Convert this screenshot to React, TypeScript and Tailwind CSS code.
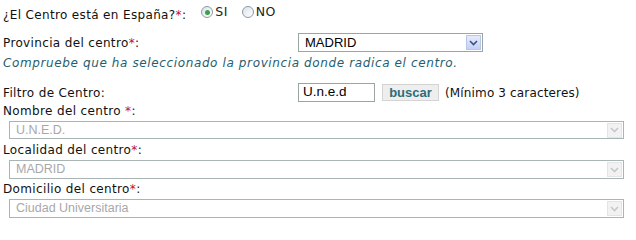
import { ReactNode } from "react";

const FONT = { fontFamily: '"DejaVu Sans", Verdana, sans-serif' };
const ARIAL = { fontFamily: '"Liberation Sans", Arial, sans-serif' };

function Req() {
  return <span className="text-[#c0102a]">*</span>;
}

function Radio({ checked, label }: { checked?: boolean; label: string }) {
  return (
    <span className="flex items-center">
      <span className="flex h-[12px] w-[12px] items-center justify-center rounded-full border border-[#8a9aa8] bg-gradient-to-br from-[#dde3ea] to-white">
        {checked && <span className="h-[5px] w-[5px] rounded-full bg-[#3aa04a]" />}
      </span>
      <span className="ml-[2px] text-[12.5px] leading-[12px] tracking-[0.4px] text-[#222]">{label}</span>
    </span>
  );
}

function Arrow({ disabled }: { disabled?: boolean }) {
  return (
    <span
      className={
        disabled
          ? "flex h-[15px] w-[15px] items-center justify-center border border-[#e4e4e4] bg-[#f2f2f2]"
          : "flex h-[15px] w-[15px] items-center justify-center border border-[#b8c6e8] bg-gradient-to-b from-[#e6ecfb] to-[#c3d0f2]"
      }
    >
      <svg width="9" height="6" viewBox="0 0 9 6">
        <path d="M1 1 L4.5 4.5 L8 1" fill="none" stroke={disabled ? "#c8c8c8" : "#3a4f8c"} strokeWidth="1.6" />
      </svg>
    </span>
  );
}

function Select({ value, disabled, className }: { value: string; disabled?: boolean; className: string }) {
  return (
    <div
      className={`flex items-center justify-between border pl-[6px] pr-[1px] ${
        disabled ? "border-[#a9b4b4] text-[#a8a8a8]" : "border-[#9aa6a6] text-black"
      } bg-white ${className}`}
      style={ARIAL}
    >
      <span className={disabled ? "text-[12.5px]" : "text-[13px]"}>{value}</span>
      <Arrow disabled={disabled} />
    </div>
  );
}

function Label({ children, className = "" }: { children: ReactNode; className?: string }) {
  return <div className={`text-[12px] leading-[14px] tracking-[0.35px] text-[#111] ${className}`}>{children}</div>;
}

export default function App() {
  return (
    <div className="h-[219px] w-[636px] overflow-hidden bg-white pl-[3px] pt-[5px]" style={FONT}>
      <div className="flex h-[20px] items-start">
        <Label className="pt-[3px]">
          ¿El Centro está en España?<Req />:
        </Label>
        <div className="ml-[15px] flex gap-[14px] pt-[1px]">
          <Radio checked label="SI" />
          <Radio label="NO" />
        </div>
      </div>
      <div className="mt-[8px] flex h-[19px] items-center">
        <Label className="w-[295px]">
          Provincia del centro<Req />:
        </Label>
        <Select value="MADRID" className="h-[19px] w-[185px]" />
      </div>
      <div className="mt-[4px] text-[12px] italic leading-[14px] tracking-[0.62px] text-[#1f6070]">
        Compruebe que ha seleccionado la provincia donde radica el centro.
      </div>
      <div className="mt-[13px] flex h-[19px] items-center">
        <Label className="w-[295px]">Filtro de Centro:</Label>
        <div className="flex h-[19px] w-[77px] items-center border border-[#9aa6a6] pl-[4px] text-[13.5px] text-black" style={ARIAL}>
          U.n.e.d
        </div>
        <button
          className="ml-[7px] h-[17px] w-[57px] border border-[#d4d4d4] bg-[#eeeeee] text-[13px] font-bold leading-[15px] text-[#2c6d7d]"
          style={ARIAL}
        >
          buscar
        </button>
        <span className="ml-[6px] text-[12px] tracking-[0.15px] text-[#111]">(Mínimo 3 caracteres)</span>
      </div>
      <Label className="mt-[2px]">
        Nombre del centro <Req />:
      </Label>
      <Select value="U.N.E.D." disabled className="ml-[6px] mt-[3px] h-[18px] w-[615px]" />
      <Label className="mt-[4px]">
        Localidad del centro<Req />:
      </Label>
      <Select value="MADRID" disabled className="ml-[6px] mt-[3px] h-[19px] w-[615px]" />
      <Label className="mt-[3px]">
        Domicilio del centro<Req />:
      </Label>
      <Select value="Ciudad Universitaria" disabled className="ml-[6px] mt-[3px] h-[19px] w-[615px]" />
    </div>
  );
}
